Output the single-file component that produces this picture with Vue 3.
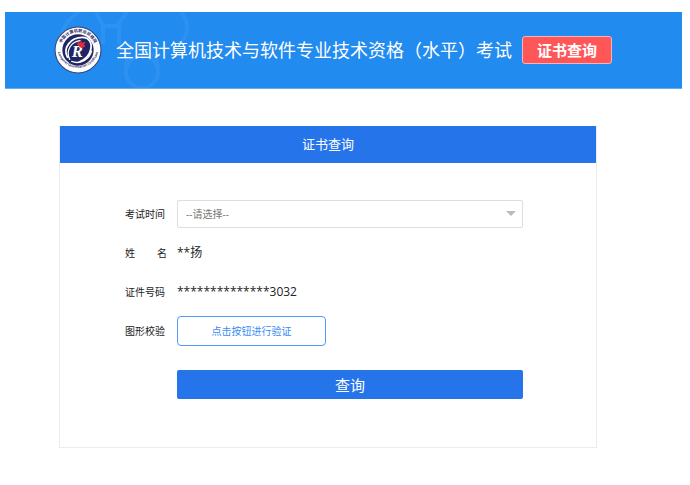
<template>
  <div class="page">
    <header class="banner">
      <svg class="banner-art" viewBox="0 0 190 76" aria-hidden="true">
        <g fill="none" stroke="#2c91f1" stroke-width="4">
          <path d="M74 0C62 7 57 16 56 28M91 0l7 14h14l10-14M98 14v18M114 14v18" />
          <path d="M176 0c10 12 8 28-8 36" />
          <path d="M120 56l4-14M154 56l-6-16" />
          <circle cx="137" cy="60" r="16" />
        </g>
      </svg>
      <svg class="logo" viewBox="0 0 46 46" role="img" aria-label="logo">
        <defs>
          <path id="arc-top" d="M6 23A17 17 0 0 1 40 23" />
          <path id="arc-bottom" d="M3 20A20 20 0 0 0 43 20" />
        </defs>
        <circle cx="23" cy="23" r="22" fill="#fff" stroke="#33457f" stroke-width="1" />
        <circle cx="23" cy="23" r="15" fill="#1f2462" />
        <g fill="none" stroke="#fff" stroke-linecap="round">
          <path d="M13 30C8 21 16 11 27 11C34 11 37 17 35 23C34 28 30 32 25 34" stroke-width="1.700" />
          <path d="M15 32C11 24 16 15 25 14" stroke-width="1.200" />
          <path d="M17 34C25 37 34 32 36 24" stroke-width="1.300" />
        </g>
        <text class="logo-letter" x="17" y="30">R</text>
        <path d="M22 18l1-3 2 1 1-2 1 2 3-1-1 3 1 2-4 1z" fill="#e22d3d" />
        <text class="logo-ring">
          <textPath href="#arc-top" startOffset="50%" text-anchor="middle">中国计算机职业资格网</textPath>
        </text>
        <text class="logo-ring latin">
          <textPath href="#arc-bottom" startOffset="50%" text-anchor="middle">Computer Qualification Certificate</textPath>
        </text>
      </svg>
      <h1>全国计算机技术与软件专业技术资格（水平）考试</h1>
      <button type="button" class="banner-btn">证书查询</button>
    </header>

    <main class="card">
      <h2>证书查询</h2>
      <form @submit.prevent>
        <div class="row">
          <label for="exam-time">考试时间</label>
          <div class="select-box">
            <select id="exam-time" v-model="examTime">
              <option value="">--请选择--</option>
            </select>
            <svg class="arrow" viewBox="0 0 10 5" aria-hidden="true">
              <path d="M0 0h10L5 5z" fill="#bbb" />
            </svg>
          </div>
        </div>
        <div v-for="item in details" :key="item.label" class="row">
          <span class="label">
            <span v-for="part in item.label.split(' ')" :key="part">{{ part }}</span>
          </span>
          <span class="value">{{ item.value }}</span>
        </div>
        <div class="row">
          <label for="verify">图形校验</label>
          <button id="verify" type="button" class="verify">点击按钮进行验证</button>
        </div>
        <button type="submit" class="submit">查询</button>
      </form>
    </main>
  </div>
</template>

<script setup>
import { ref } from "vue";

const examTime = ref("");

const details = [
  { label: "姓 名", value: "**扬" },
  { label: "证件号码", value: "**************3032" },
];
</script>

<style>
body {
  background: #fff;
}
</style>

<style scoped>
.page {
  padding: 12px 8px 38px 5px;
  font-family: "Open Sans", "Noto Sans CJK SC", sans-serif;
  color: #222;
}

.banner {
  position: relative;
  display: flex;
  align-items: center;
  height: 76px;
  padding-left: 49px;
  background: #228bef;
  border-bottom: 1px solid #62b1ee;
}

.banner-art {
  position: absolute;
  left: 0;
  top: 0;
  width: 190px;
  height: 76px;
}

.logo {
  position: relative;
  flex: none;
  width: 48px;
  height: 48px;
}

.logo-letter {
  font: italic bold 16px "Liberation Serif", serif;
  fill: #fff;
}

.logo-ring {
  font-size: 4px;
  font-weight: bold;
  fill: #1f2462;
}

.logo-ring.latin {
  font-size: 3px;
}

h1 {
  position: relative;
  margin: 0 10px 0 14px;
  font-size: 18px;
  font-weight: 400;
  line-height: 26px;
  white-space: nowrap;
  color: #fff;
}

button {
  padding: 0;
  font-family: inherit;
  cursor: pointer;
}

.banner-btn {
  flex: none;
  width: 90px;
  height: 28px;
  border: 1px solid #f3b5bd;
  border-radius: 3px;
  background: #ff5658;
  color: #fff;
  font-size: 15px;
  font-weight: 700;
  line-height: 24px;
}

.card {
  margin: 37px 85px 0 54px;
  border: 1px solid #ececee;
  border-top: 0;
}

h2 {
  margin: 0;
  background: #2574ea;
  color: #fff;
  font-size: 13px;
  font-weight: 400;
  line-height: 37px;
  text-align: center;
}

form {
  display: flex;
  flex-direction: column;
  gap: 9px;
  padding: 36px 73px 48px 65px;
}

.row {
  display: flex;
  align-items: center;
  height: 30px;
}

label,
.label {
  display: flex;
  flex: none;
  justify-content: space-between;
  width: 42px;
  margin-right: 10px;
  padding-bottom: 2px;
  font-size: 10px;
}

.value {
  padding-bottom: 2px;
  font-size: 12px;
}

.select-box {
  position: relative;
  flex: 1;
}

select {
  display: block;
  width: 100%;
  height: 28px;
  padding: 0 8px;
  appearance: none;
  border: 1px solid #dedede;
  border-radius: 2px;
  background: #fff;
  color: #777;
  font-family: inherit;
  font-size: 10px;
}

.arrow {
  position: absolute;
  right: 7px;
  top: 11px;
  width: 10px;
  height: 5px;
  pointer-events: none;
}

.verify {
  width: 149px;
  height: 30px;
  padding-bottom: 2px;
  border: 1px solid #529af5;
  border-radius: 4px;
  background: #fff;
  color: #3b8bf5;
  font-size: 10px;
}

.submit {
  height: 29px;
  margin: 15px 0 0 52px;
  border: 0;
  border-radius: 2px;
  background: #2574ea;
  color: #fff;
  font-size: 15px;
}
</style>
